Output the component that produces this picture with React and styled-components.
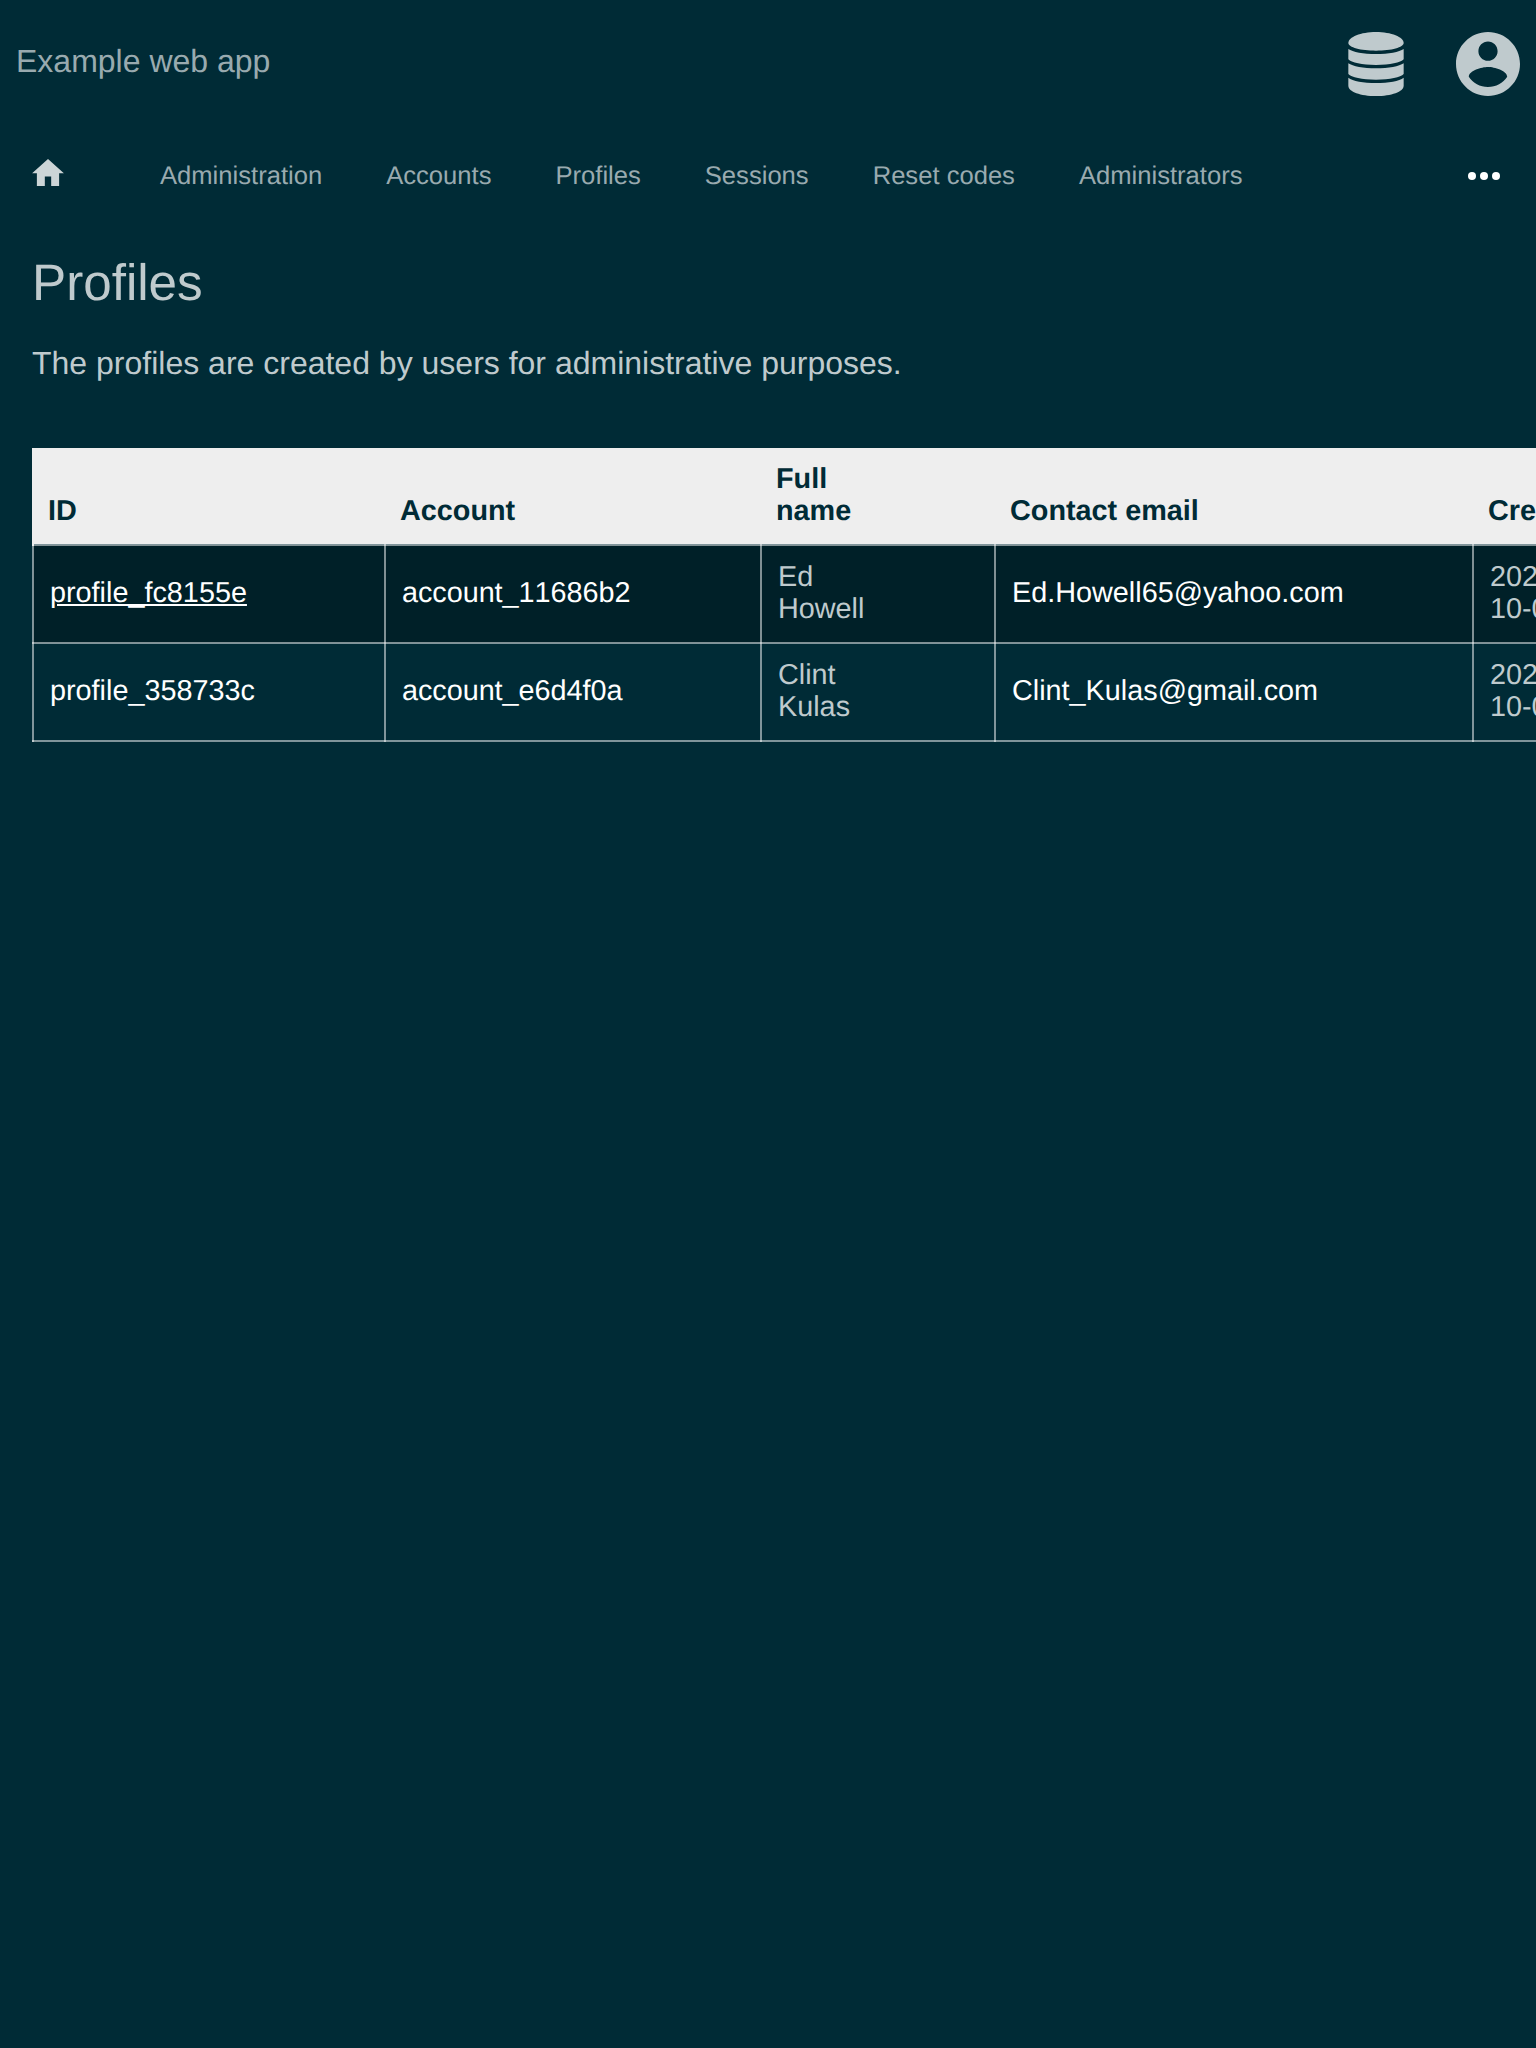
import React from 'react';
import styled, { createGlobalStyle } from 'styled-components';

const GlobalStyle = createGlobalStyle`
  *, *::before, *::after { box-sizing: border-box; }
  html { background: #002b36; }
  body {
    margin: 0;
    overflow-x: hidden;
    background: #002b36;
    color: #bfcacd;
    font-family: "Liberation Sans", Arial, sans-serif;
    font-size: 32px;
    text-rendering: geometricPrecision;
  }
`;

const Page = styled.div`
  min-height: 2048px;
  overflow: hidden;
`;

const TopBar = styled.header`
  display: flex;
  align-items: center;
  justify-content: space-between;
  height: 128px;
  padding: 0 16px;
`;

const AppTitle = styled.a`
  color: #99aaaf;
  line-height: 36px;
  padding-bottom: 6px;
`;

const TopIcons = styled.div`
  display: flex;
  align-items: center;
  gap: 52px;
`;

const Icon = styled.svg`
  display: block;
  width: ${(p) => p.$w}px;
  height: ${(p) => p.$h}px;
  fill: ${(p) => p.$color || '#bfcacd'};
`;

const NavBar = styled.nav`
  display: flex;
  align-items: center;
  height: 96px;
  padding: 0 36px 0 32px;
`;

const HomeLink = styled.a`
  display: block;
  margin: 0 96px 8px 0;
`;

const NavList = styled.div`
  display: flex;
  flex: 1;
  gap: 64px;
`;

const NavLink = styled.a`
  color: #99aaaf;
  font-size: 25.6px;
  line-height: 30px;
  white-space: nowrap;
`;

const Main = styled.main`
  padding: 29px 32px 0;
`;

const Heading = styled.h1`
  margin: 0;
  font-size: 51.2px;
  line-height: 60px;
  font-weight: 400;
`;

const Lead = styled.p`
  margin: 32px 0 67px;
  line-height: 36px;
`;

const Table = styled.table`
  width: 1792px;
  table-layout: fixed;
  border-collapse: collapse;
  font-size: 28.8px;
  line-height: 32px;
`;

const Col = styled.col`
  width: ${(p) => p.$w}px;
`;

const HeadCell = styled.th`
  padding: 15px 16px 17px 15px;
  background: #eee;
  background-clip: padding-box;
  color: #002b36;
  text-align: left;
  vertical-align: bottom;

  &:first-child {
    padding-left: 14px;
    border-left: 2px solid #eee;
  }
`;

const Row = styled.tr`
  background: ${(p) => (p.$active ? 'rgba(0, 0, 0, 0.25)' : 'transparent')};
`;

const Cell = styled.td`
  padding: 15px 16px 17px;
  border: 2px solid rgba(255, 255, 255, 0.5);
`;

const CellLink = styled.a`
  color: #fff;
  text-decoration: ${(p) => (p.$underlined ? 'underline' : 'none')};
`;

const AccountLink = styled(CellLink)`
  font-kerning: none;
  letter-spacing: -0.04px;
`;

const Line = styled.span`
  display: block;
`;

const navItems = ['Administration', 'Accounts', 'Profiles', 'Sessions', 'Reset codes', 'Administrators'];

const columns = [
  { title: ['ID'], width: 352 },
  { title: ['Account'], width: 376 },
  { title: ['Full', 'name'], width: 234 },
  { title: ['Contact email'], width: 478 },
  { title: ['Created'], width: 352 },
];

const profiles = [
  { id: 'profile_fc8155e', account: 'account_11686b2', name: ['Ed', 'Howell'], email: 'Ed.Howell65@yahoo.com', created: ['2023-', '10-05'], active: true },
  { id: 'profile_358733c', account: 'account_e6d4f0a', name: ['Clint', 'Kulas'], email: 'Clint_Kulas@gmail.com', created: ['2023-', '10-05'], active: false },
];

const Lines = ({ items }) => items.map((t) => <Line key={t}>{t}</Line>);

const DatabaseIcon = () => (
  <Icon viewBox="0 0 168 192" $w={56} $h={64}>
    <path d="M84 0C130 0 167 15 167 33C167 46 130 56 84 56S1 46 1 33C1 15 38 0 84 0Z" />
    <path d="M1 51C14 60 46 66 84 66S154 60 167 51V82C158 92 126 99 84 99S10 92 1 82Z" />
    <path d="M1 94C14 103 46 109 84 109S154 103 167 94V126C158 136 126 143 84 143S10 136 1 126Z" />
    <path d="M1 137C14 147 46 153 84 153S154 147 167 137V161C167 179 130 192 84 192S1 179 1 161Z" />
  </Icon>
);

const AccountIcon = () => (
  <Icon viewBox="2 2 20 20" $w={64} $h={64}>
    <path d="M12 2C6.48 2 2 6.48 2 12s4.48 10 10 10 10-4.48 10-10S17.52 2 12 2zm0 3c1.66 0 3 1.34 3 3s-1.34 3-3 3-3-1.34-3-3 1.34-3 3-3zm0 14.2c-2.5 0-4.71-1.28-6-3.22.03-1.99 4-3.08 6-3.08 1.99 0 5.97 1.09 6 3.08-1.29 1.94-3.5 3.22-6 3.22z" />
  </Icon>
);

const HomeIcon = () => (
  <Icon viewBox="2 3 20 17" $w={32} $h={27} $color="#ccd5d7">
    <path d="M10 20v-6h4v6h5v-8h3L12 3 2 12h3v8z" />
  </Icon>
);

const MoreIcon = () => (
  <Icon viewBox="0 0 32 8" $w={32} $h={8} $color="#fff">
    <circle cx="4" cy="4" r="4" />
    <circle cx="16" cy="4" r="4" />
    <circle cx="28" cy="4" r="4" />
  </Icon>
);

export default function App() {
  return (
    <>
      <GlobalStyle />
      <Page>
        <TopBar>
          <AppTitle>Example web app</AppTitle>
          <TopIcons>
            <DatabaseIcon />
            <AccountIcon />
          </TopIcons>
        </TopBar>
        <NavBar>
          <HomeLink><HomeIcon /></HomeLink>
          <NavList>
            {navItems.map((item) => <NavLink key={item}>{item}</NavLink>)}
          </NavList>
          <MoreIcon />
        </NavBar>
        <Main>
          <Heading>Profiles</Heading>
          <Lead>The profiles are created by users for administrative purposes.</Lead>
          <Table>
            <colgroup>
              {columns.map((c) => <Col key={c.title[0]} $w={c.width} />)}
            </colgroup>
            <thead>
              <tr>
                {columns.map((c) => <HeadCell key={c.title[0]}><Lines items={c.title} /></HeadCell>)}
              </tr>
            </thead>
            <tbody>
              {profiles.map((p) => (
                <Row key={p.id} $active={p.active}>
                  <Cell><CellLink $underlined={p.active}>{p.id}</CellLink></Cell>
                  <Cell><AccountLink>{p.account}</AccountLink></Cell>
                  <Cell><Lines items={p.name} /></Cell>
                  <Cell><CellLink>{p.email}</CellLink></Cell>
                  <Cell><Lines items={p.created} /></Cell>
                </Row>
              ))}
            </tbody>
          </Table>
        </Main>
      </Page>
    </>
  );
}
